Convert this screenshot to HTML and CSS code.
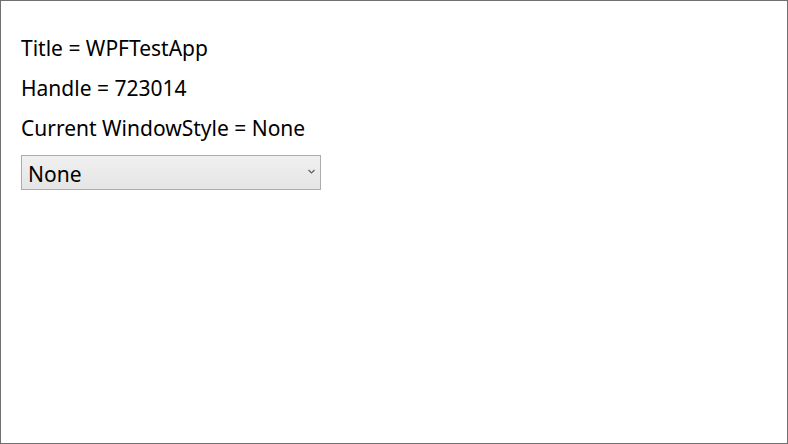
FILE: index.html
```html
<!DOCTYPE html>
<html>
<head>
<meta charset="utf-8">
<link rel="stylesheet" href="styles.css">
</head>
<body>
<div class="window">
  <div class="line">Title = WPFTestApp</div>
  <div class="line">Handle = 723014</div>
  <div class="line">Current WindowStyle = None</div>
  <div class="combo">
    <span class="combo-text">None</span>
    <svg class="chevron" width="7" height="5" viewBox="0 0 7 5"><path d="M0.5 1 L3.5 4 L6.5 1" fill="none" stroke="#606060" stroke-width="1.2"/></svg>
  </div>
</div>
</body>
</html>
```
FILE: styles.css
```css
html, body { margin: 0; padding: 0; background: #fff; }
.window {
  width: 788px; height: 444px; box-sizing: border-box;
  border: 1px solid #707070;
  padding: 27px 20px 0 20px;
  display: flex; flex-direction: column; align-items: flex-start;
  font-family: "Noto Sans", "Open Sans", sans-serif;
  font-size: 21px; color: #000;
}
.line { height: 40px; line-height: 40px; }
.combo {
  margin-top: 7px;
  width: 300px; height: 35px; box-sizing: border-box;
  border: 1px solid #acacac;
  background: linear-gradient(#f0f0f0, #e5e5e5);
  display: flex; align-items: center; justify-content: space-between;
  padding: 0 5px 0 6px;
}
.combo-text { line-height: 33px; padding-top: 3px; }
.chevron { margin-bottom: 2px; }
```
